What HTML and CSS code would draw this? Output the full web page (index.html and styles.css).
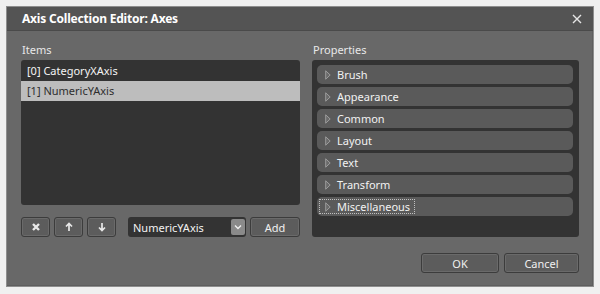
FILE: index.html
```html
<!DOCTYPE html>
<html>
<head>
<meta charset="utf-8">
<link rel="stylesheet" href="styles.css">
</head>
<body>
<div class="dialog">
  <div class="titlebar">
    <span class="title">Axis Collection Editor: Axes</span>
    <svg class="close" width="10" height="10" viewBox="0 0 10 10"><path d="M1 1L9 9M9 1L1 9" stroke="#e6e6e6" stroke-width="1.4" fill="none"/></svg>
  </div>
  <div class="content">
    <div class="columns">
      <div class="col left">
        <div class="label">Items</div>
        <div class="listbox">
          <div class="item">[0] CategoryXAxis</div>
          <div class="item selected">[1] NumericYAxis</div>
        </div>
        <div class="toolbar">
          <button class="btn icon-btn"><svg width="10" height="10" viewBox="0 0 10 10"><path d="M2 2L8 8M8 2L2 8" stroke="#e8e8e8" stroke-width="2.4" fill="none"/></svg></button>
          <button class="btn icon-btn"><svg width="10" height="10" viewBox="0 0 10 10"><path d="M5 9V2M2 4.5L5 1.5L8 4.5" stroke="#e8e8e8" stroke-width="1.7" fill="none"/></svg></button>
          <button class="btn icon-btn"><svg width="10" height="10" viewBox="0 0 10 10"><path d="M5 1V8M2 5.5L5 8.5L8 5.5" stroke="#e8e8e8" stroke-width="1.7" fill="none"/></svg></button>
          <div class="combo">
            <span class="combo-text">NumericYAxis</span>
            <span class="combo-arrow"><svg width="8" height="6" viewBox="0 0 8 6"><path d="M1 1.5L4 4.5L7 1.5" stroke="#f0f0f0" stroke-width="1.4" fill="none"/></svg></span>
          </div>
          <button class="btn add-btn">Add</button>
        </div>
      </div>
      <div class="col right">
        <div class="label">Properties</div>
        <div class="propbox">
          <div class="cat"><svg class="tri" width="6" height="10" viewBox="0 0 6 10"><path d="M0.7 0.8L5.2 5L0.7 9.2Z" stroke="#9c9c9c" stroke-width="1" fill="#6a6a6a"/></svg><span class="cat-text">Brush</span></div>
          <div class="cat"><svg class="tri" width="6" height="10" viewBox="0 0 6 10"><path d="M0.7 0.8L5.2 5L0.7 9.2Z" stroke="#9c9c9c" stroke-width="1" fill="#6a6a6a"/></svg><span class="cat-text">Appearance</span></div>
          <div class="cat"><svg class="tri" width="6" height="10" viewBox="0 0 6 10"><path d="M0.7 0.8L5.2 5L0.7 9.2Z" stroke="#9c9c9c" stroke-width="1" fill="#6a6a6a"/></svg><span class="cat-text">Common</span></div>
          <div class="cat"><svg class="tri" width="6" height="10" viewBox="0 0 6 10"><path d="M0.7 0.8L5.2 5L0.7 9.2Z" stroke="#9c9c9c" stroke-width="1" fill="#6a6a6a"/></svg><span class="cat-text">Layout</span></div>
          <div class="cat"><svg class="tri" width="6" height="10" viewBox="0 0 6 10"><path d="M0.7 0.8L5.2 5L0.7 9.2Z" stroke="#9c9c9c" stroke-width="1" fill="#6a6a6a"/></svg><span class="cat-text">Text</span></div>
          <div class="cat"><svg class="tri" width="6" height="10" viewBox="0 0 6 10"><path d="M0.7 0.8L5.2 5L0.7 9.2Z" stroke="#9c9c9c" stroke-width="1" fill="#6a6a6a"/></svg><span class="cat-text">Transform</span></div>
          <div class="cat"><span class="focus"><svg class="tri" width="6" height="10" viewBox="0 0 6 10"><path d="M0.7 0.8L5.2 5L0.7 9.2Z" stroke="#9c9c9c" stroke-width="1" fill="#6a6a6a"/></svg><span class="cat-text">Miscellaneous</span></span></div>
        </div>
      </div>
    </div>
    <div class="footer">
      <button class="btn ok-btn">OK</button>
      <button class="btn cancel-btn">Cancel</button>
    </div>
  </div>
</div>
</body>
</html>
```

FILE: styles.css
```css
* { box-sizing: border-box; }
html, body { margin: 0; padding: 0; }
body {
  background: #f0f0f0;
  width: 600px;
  height: 294px;
  padding: 6px;
  font-family: "Noto Sans", "DejaVu Sans", sans-serif;
  font-size: 11px;
  color: #f0f0f0;
}
.dialog {
  width: 588px;
  height: 281px;
  border: 1px solid #8e8e8e;
  background: #686868;
  display: flex;
  flex-direction: column;
}
.titlebar {
  height: 24px;
  background: #545454;
  border-bottom: 1px solid #4a4a4a;
  display: flex;
  align-items: center;
  justify-content: space-between;
  padding: 0 11px 0 15px;
  flex: none;
}
.title {
  font-weight: bold;
  font-size: 12px;
  color: #ffffff;
  letter-spacing: -0.2px;
}
.close { display: block; }
.content {
  flex: 1;
  padding: 11px 13px 0 14px;
  display: flex;
  flex-direction: column;
  border-right: 1px solid #5e5e5e;
  border-bottom: 1px solid #5e5e5e;
}
.columns {
  display: flex;
  gap: 12px;
}
.col { display: flex; flex-direction: column; }
.left { width: 279px; }
.right { width: 267px; }
.label {
  height: 16px;
  line-height: 16px;
  margin-bottom: 2px;
  padding-left: 1px;
  color: #e8e8e8;
}
.listbox {
  height: 145px;
  background: #333333;
  border-radius: 3px;
  padding-top: 1px;
  margin-bottom: 12px;
}
.item {
  height: 20px;
  line-height: 20px;
  padding-left: 6px;
  color: #f4f4f4;
}
.item.selected {
  background: #bdbdbd;
  color: #2e2e2e;
}
.toolbar {
  display: flex;
  height: 20px;
}
.btn {
  font-family: inherit;
  font-size: 11px;
  color: #f0f0f0;
  background: #5c5c5c;
  border: 1px solid #3c3c3c;
  border-radius: 3px;
  box-shadow: inset 0 0 0 1px #6a6a6a;
  padding: 0;
  margin: 0;
  height: 20px;
  display: flex;
  align-items: center;
  justify-content: center;
}
.icon-btn { width: 29px; margin-right: 4px; }
.icon-btn svg { display: block; }
.combo {
  width: 118px;
  height: 20px;
  margin-left: 8px;
  margin-right: 4px;
  background: #333333;
  border-radius: 3px;
  display: flex;
  align-items: center;
  justify-content: space-between;
  padding: 0 1px 0 5px;
}
.combo-text { color: #f2f2f2; }
.combo-arrow {
  width: 14px;
  height: 16px;
  background: #8a8a8a;
  border-radius: 2px;
  display: flex;
  align-items: center;
  justify-content: center;
}
.add-btn { width: 50px; }
.propbox {
  height: 177px;
  background: #333333;
  border-radius: 3px;
  padding: 5px 6px 0 5px;
  display: flex;
  flex-direction: column;
  gap: 3px;
}
.cat {
  height: 19px;
  background: #5a5a5a;
  border-radius: 5px;
  display: flex;
  align-items: center;
  padding-left: 2px;
}
.tri {
  display: block;
  flex: none;
  margin-left: 6px;
  margin-right: 6px;
}
.cat-text { color: #f2f2f2; font-size: 11px; }
.focus {
  display: flex;
  align-items: center;
  height: 15px;
  padding-right: 4px;
  border: 1px dotted #c0c0c0;
}
.focus .tri { margin-left: 5px; }
.footer {
  display: flex;
  justify-content: flex-end;
  gap: 5px;
  margin-top: 16px;
}
.ok-btn { width: 78px; }
.cancel-btn { width: 75px; }
```
